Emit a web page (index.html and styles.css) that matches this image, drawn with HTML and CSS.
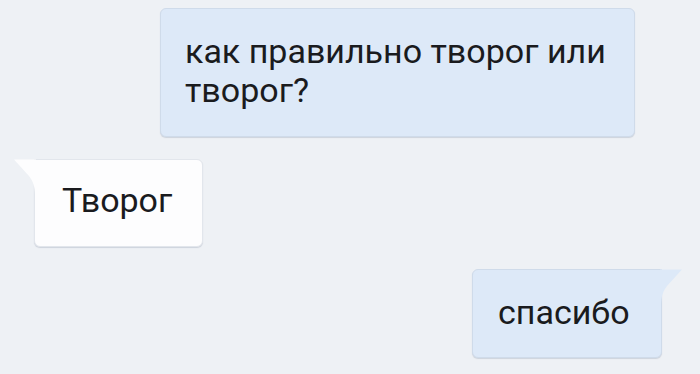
FILE: index.html
```html
<!DOCTYPE html>
<html lang="ru">
<head>
  <meta charset="UTF-8">
  <meta name="viewport" content="width=device-width, initial-scale=1.0">
  <title>Диалог</title>
  <link rel="stylesheet" href="styles.css">
</head>
<body>
  <div class="chat">
    <div class="message message-out message-first">
      <div class="bubble">как правильно творог или<br>творог?</div>
    </div>

    <div class="message message-in">
      <div class="bubble">
        <svg class="tail tail-left" width="22" height="36" viewBox="0 0 22 36">
          <path d="M0 0.5 H22 V36 H21 C21 28 19 22 15 17 Z" />
        </svg>
        Творог
      </div>
    </div>

    <div class="message message-out message-last">
      <div class="bubble">
        <svg class="tail tail-right" width="22" height="36" viewBox="0 0 22 36">
          <path d="M22 0.5 H0 V36 H1 C1 28 3 22 7 17 Z" />
        </svg>
        спасибо
      </div>
    </div>
  </div>
</body>
</html>
```

FILE: styles.css
```css
:root {
  --bg-page: #eef1f5;
  --bubble-out: #dde9f8;
  --bubble-in: #fdfdfe;
  --border-out: #cfdbea;
  --border-in: #e2e6ec;
  --text-primary: #1a1b1e;
}

* {
  margin: 0;
  padding: 0;
  box-sizing: border-box;
}

body {
  width: 700px;
  height: 374px;
  overflow: hidden;
  background-color: var(--bg-page);
  font-family: Roboto, "Noto Sans", sans-serif;
  color: var(--text-primary);
}

.chat {
  display: flex;
  flex-direction: column;
  padding-top: 8px;
}

.message {
  display: flex;
}

.message-out {
  justify-content: flex-end;
}

.message-in {
  justify-content: flex-start;
}

.bubble {
  position: relative;
  font-size: 34px;
  line-height: 39px;
  border-radius: 6px;
  box-shadow: 0 1px 1px rgba(60, 80, 110, 0.18);
}

.message-out .bubble {
  background-color: var(--bubble-out);
  border: 1px solid var(--border-out);
}

.message-in .bubble {
  background-color: var(--bubble-in);
  border: 1px solid var(--border-in);
}

/* first outgoing message, no tail */
.message-first .bubble {
  width: 475px;
  height: 129px;
  margin-right: 65px;
  padding: 23px 24px;
}

.message-in {
  margin-top: 22px;
}

.message-in .bubble {
  width: 169px;
  height: 88px;
  margin-left: 34px;
  padding: 21px 27px;
  border-top-left-radius: 0;
}

.message-last {
  margin-top: 22px;
}

.message-last .bubble {
  width: 190px;
  height: 89px;
  margin-right: 38px;
  padding: 23px 25px;
  border-top-right-radius: 0;
}

.tail {
  position: absolute;
  top: -1px;
}

.tail-left {
  left: -21px;
  fill: var(--bubble-in);
}

.tail-right {
  right: -21px;
  fill: var(--bubble-out);
}
```
